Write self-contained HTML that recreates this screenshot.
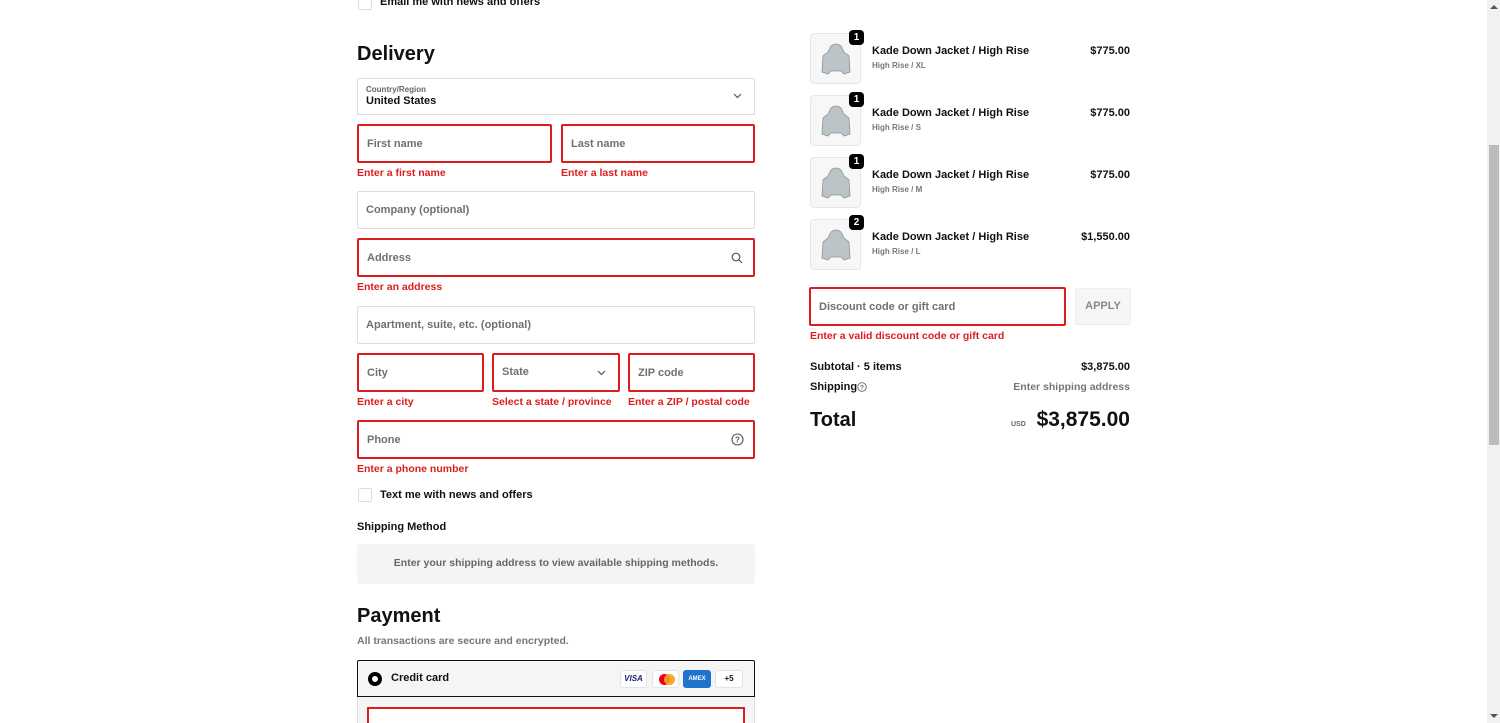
<!DOCTYPE html>
<html><head><meta charset="utf-8"><style>
*{margin:0;padding:0;box-sizing:border-box}
html,body{width:1500px;height:723px;overflow:hidden}
body{background:#fff;font-family:"Liberation Sans",sans-serif;font-weight:bold;color:#111;position:relative}
.a{position:absolute}
.r{position:absolute;right:370px;text-align:right}
.f{position:absolute;border:1px solid #dedede;border-radius:2px;background:#fff}
.e{border:2px solid #dd1d1d}
.ph{position:absolute;left:8px;font-size:11px;color:#707070}
.err{position:absolute;font-size:10.5px;color:#dd1d1d}
.t{font-size:11px}
.thumb{position:absolute;left:810px;width:51px;height:51px;border:1px solid #e6e6e6;border-radius:4px;background:#f7f7f7}
.badge{position:absolute;width:15px;height:15px;border-radius:4px;background:#000;color:#fff;font-size:10px;text-align:center;line-height:15px}
.cb{position:absolute;left:358px;width:14px;height:14px;border:1px solid #ddd;border-radius:2px}
</style></head><body>
<div class="cb" style="top:-4px"></div>
<div class="a t" style="left:380px;top:-4px">Email me with news and offers</div>
<div class="a" style="left:357px;top:43px;font-size:20px">Delivery</div>

<div class="f" style="left:357px;top:78px;width:398px;height:37px"><div class="a" style="left:8px;top:6px;font-size:8px;color:#666">Country/Region</div><div class="a" style="left:8px;top:16px;font-size:11px">United States</div>
<svg class="a" style="right:12px;top:14px" width="9" height="6"><path d="M1 1l3.5 3.5L8 1" fill="none" stroke="#555" stroke-width="1.2"/></svg></div>

<div class="f e" style="left:357px;top:124px;width:195px;height:39px"><div class="ph" style="top:12px">First name</div></div>
<div class="f e" style="left:561px;top:124px;width:194px;height:39px"><div class="ph" style="top:12px">Last name</div></div>
<div class="err" style="left:357px;top:167px">Enter a first name</div>
<div class="err" style="left:561px;top:167px">Enter a last name</div>

<div class="f" style="left:357px;top:191px;width:398px;height:38px"><div class="ph" style="top:12px">Company (optional)</div></div>

<div class="f e" style="left:357px;top:238px;width:398px;height:39px"><div class="ph" style="top:12px">Address</div>
<svg class="a" style="right:10px;top:12px" width="12" height="12"><circle cx="5" cy="5" r="3.8" fill="none" stroke="#555" stroke-width="1.2"/><path d="M8 8l3 3" stroke="#555" stroke-width="1.2"/></svg></div>
<div class="err" style="left:357px;top:281px">Enter an address</div>

<div class="f" style="left:357px;top:306px;width:398px;height:38px"><div class="ph" style="top:12px">Apartment, suite, etc. (optional)</div></div>

<div class="f e" style="left:357px;top:353px;width:127px;height:39px"><div class="ph" style="top:12px">City</div></div>
<div class="f e" style="left:492px;top:353px;width:128px;height:39px"><div class="ph" style="top:11px">State</div>
<svg class="a" style="right:12px;top:15px" width="9" height="6"><path d="M1 1l3.5 3.5L8 1" fill="none" stroke="#555" stroke-width="1.2"/></svg></div>
<div class="f e" style="left:628px;top:353px;width:127px;height:39px"><div class="ph" style="top:12px">ZIP code</div></div>
<div class="err" style="left:357px;top:396px">Enter a city</div>
<div class="err" style="left:492px;top:396px">Select a state / province</div>
<div class="err" style="left:628px;top:396px">Enter a ZIP / postal code</div>

<div class="f e" style="left:357px;top:420px;width:398px;height:39px"><div class="ph" style="top:12px">Phone</div>
<svg class="a" style="right:9px;top:11px" width="13" height="13"><circle cx="6.5" cy="6.5" r="5.5" fill="none" stroke="#555" stroke-width="1.1"/><text x="6.5" y="9.6" font-size="8" text-anchor="middle" fill="#555" font-family="Liberation Sans">?</text></svg></div>
<div class="err" style="left:357px;top:463px">Enter a phone number</div>

<div class="cb" style="top:488px"></div>
<div class="a t" style="left:380px;top:489px">Text me with news and offers</div>
<div class="a t" style="left:357px;top:521px">Shipping Method</div>
<div class="a" style="left:357px;top:544px;width:398px;height:40px;background:#f4f4f4;border-radius:3px;font-size:10.5px;color:#666;text-align:center;line-height:39px">Enter your shipping address to view available shipping methods.</div>

<div class="a" style="left:357px;top:605px;font-size:20px">Payment</div>
<div class="a" style="left:357px;top:635px;font-size:10.5px;color:#777">All transactions are secure and encrypted.</div>
<div class="a" style="left:357px;top:660px;width:398px;height:37px;border:1px solid #111;border-radius:2px 2px 0 0;background:#f5f5f5">
<div class="a" style="left:10px;top:11px;width:14px;height:14px;border-radius:50%;border:4px solid #000;background:#fff"></div>
<div class="a t" style="left:33px;top:11px">Credit card</div>
<div class="a" style="left:262px;top:9px;width:27px;height:18px;background:#fff;border:1px solid #e4e4e4;border-radius:3px;font-size:8px;color:#1a1f71;text-align:center;line-height:16px;font-style:italic">VISA</div>
<div class="a" style="left:294px;top:9px;width:27px;height:18px;background:#fff;border:1px solid #e4e4e4;border-radius:3px"><div class="a" style="left:6px;top:3px;width:11px;height:11px;border-radius:50%;background:#eb001b"></div><div class="a" style="left:11px;top:3px;width:11px;height:11px;border-radius:50%;background:#f79e1b;opacity:.9"></div></div>
<div class="a" style="left:325px;top:9px;width:28px;height:18px;background:#1f72cd;border-radius:3px;font-size:6px;color:#fff;text-align:center;line-height:18px">AMEX</div>
<div class="a" style="left:357px;top:9px;width:28px;height:18px;background:#fff;border:1px solid #e4e4e4;border-radius:3px;font-size:8px;text-align:center;line-height:16px">+5</div>
</div>
<div class="a" style="left:357px;top:697px;width:398px;height:30px;background:#f5f5f5;border:1px solid #ddd;border-top:none"></div>
<div class="a" style="left:367px;top:707px;width:378px;height:30px;border:2px solid #dd1d1d;background:#fff"></div>

<!-- right -->
<div class="thumb" style="top:33px"><svg class="a" style="left:10px;top:8px" width="30" height="34"><path d="M10 4q5-4 10 0l3 6 5 4 1 16-6 2-3-3H10l-3 3-6-2 1-16 5-4z" fill="#bcc4c8" stroke="#8a9499" stroke-width=".8"/></svg></div>
<div class="badge" style="left:849px;top:30px">1</div>
<div class="a t" style="left:872px;top:45px">Kade Down Jacket / High Rise</div>
<div class="a" style="left:872px;top:61px;font-size:8px;color:#777">High Rise / XL</div>
<div class="r t" style="top:45px">$775.00</div>

<div class="thumb" style="top:95px"><svg class="a" style="left:10px;top:8px" width="30" height="34"><path d="M10 4q5-4 10 0l3 6 5 4 1 16-6 2-3-3H10l-3 3-6-2 1-16 5-4z" fill="#bcc4c8" stroke="#8a9499" stroke-width=".8"/></svg></div>
<div class="badge" style="left:849px;top:92px">1</div>
<div class="a t" style="left:872px;top:107px">Kade Down Jacket / High Rise</div>
<div class="a" style="left:872px;top:123px;font-size:8px;color:#777">High Rise / S</div>
<div class="r t" style="top:107px">$775.00</div>

<div class="thumb" style="top:157px"><svg class="a" style="left:10px;top:8px" width="30" height="34"><path d="M10 4q5-4 10 0l3 6 5 4 1 16-6 2-3-3H10l-3 3-6-2 1-16 5-4z" fill="#bcc4c8" stroke="#8a9499" stroke-width=".8"/></svg></div>
<div class="badge" style="left:849px;top:154px">1</div>
<div class="a t" style="left:872px;top:169px">Kade Down Jacket / High Rise</div>
<div class="a" style="left:872px;top:185px;font-size:8px;color:#777">High Rise / M</div>
<div class="r t" style="top:169px">$775.00</div>

<div class="thumb" style="top:219px"><svg class="a" style="left:10px;top:8px" width="30" height="34"><path d="M10 4q5-4 10 0l3 6 5 4 1 16-6 2-3-3H10l-3 3-6-2 1-16 5-4z" fill="#bcc4c8" stroke="#8a9499" stroke-width=".8"/></svg></div>
<div class="badge" style="left:849px;top:215px">2</div>
<div class="a t" style="left:872px;top:231px">Kade Down Jacket / High Rise</div>
<div class="a" style="left:872px;top:247px;font-size:8px;color:#777">High Rise / L</div>
<div class="r t" style="top:231px">$1,550.00</div>

<div class="f e" style="left:809px;top:287px;width:257px;height:39px"><div class="ph" style="top:12px">Discount code or gift card</div></div>
<div class="a" style="left:1075px;top:288px;width:56px;height:37px;background:#f6f6f6;border:1px solid #eee;border-radius:2px;font-size:11px;color:#888;text-align:center;line-height:35px">APPLY</div>
<div class="err" style="left:810px;top:330px">Enter a valid discount code or gift card</div>

<div class="a t" style="left:810px;top:361px">Subtotal · 5 items</div>
<div class="r t" style="top:361px">$3,875.00</div>
<div class="a t" style="left:810px;top:381px">Shipping</div>
<svg class="a" style="left:857px;top:382px" width="10" height="10"><circle cx="5" cy="5" r="4.3" fill="none" stroke="#666" stroke-width=".9"/><text x="5" y="7.5" font-size="6.5" text-anchor="middle" fill="#666" font-family="Liberation Sans">?</text></svg>
<div class="r" style="top:381px;font-size:10.5px;color:#777">Enter shipping address</div>
<div class="a" style="left:810px;top:409px;font-size:20px">Total</div>
<div class="a" style="left:1011px;top:421px;font-size:7px;color:#666">USD</div>
<div class="r" style="top:408px;font-size:21px">$3,875.00</div>

<!-- scrollbar -->
<div class="a" style="left:1487px;top:0;width:13px;height:723px;background:#f1f1f1"></div>
<div class="a" style="left:1489px;top:145px;width:10px;height:300px;background:#bcbcbc"></div>
<svg class="a" style="left:1490px;top:4px" width="8" height="5"><path d="M0 5L4 1 8 5z" fill="#555"/></svg>
<svg class="a" style="left:1490px;top:714px" width="8" height="5"><path d="M0 0L4 4 8 0z" fill="#555"/></svg>
</body></html>
